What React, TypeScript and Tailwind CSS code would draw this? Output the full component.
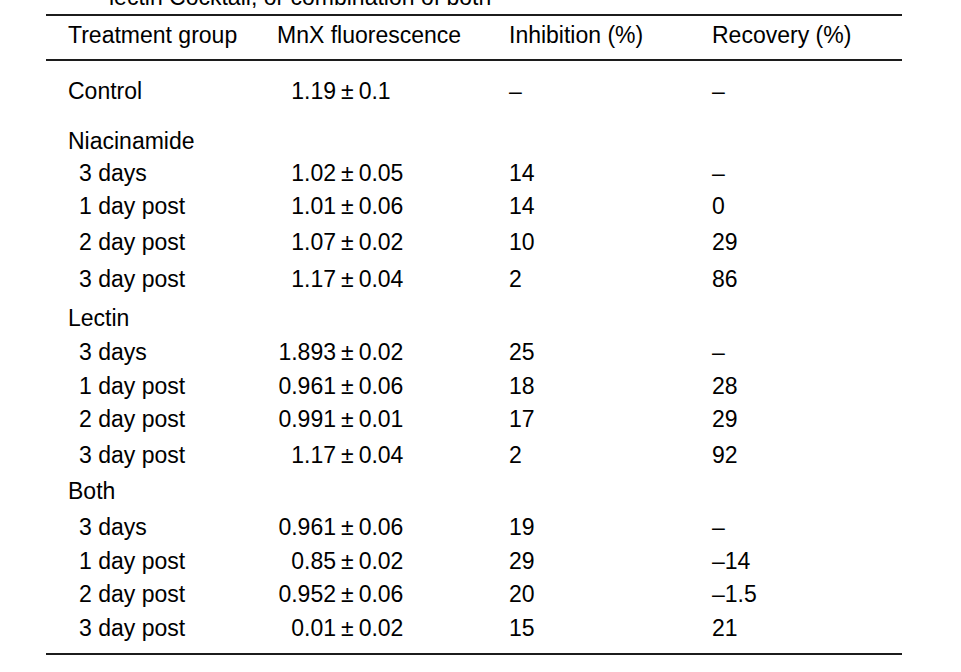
import React from "react"

type Row = {
  label: string
  sub?: boolean
  h: string
  mean?: string
  sd?: string
  inhibition?: string
  recovery?: string
}

const rows: Row[] = [
  { label: "Control", h: "h-[50px]", mean: "1.19", sd: "0.1", inhibition: "–", recovery: "–" },
  { label: "Niacinamide", h: "h-[32px]" },
  { label: "3 days", sub: true, h: "h-[33px]", mean: "1.02", sd: "0.05", inhibition: "14", recovery: "–" },
  { label: "1 day post", sub: true, h: "h-[36px]", mean: "1.01", sd: "0.06", inhibition: "14", recovery: "0" },
  { label: "2 day post", sub: true, h: "h-[37px]", mean: "1.07", sd: "0.02", inhibition: "10", recovery: "29" },
  { label: "3 day post", sub: true, h: "h-[39px]", mean: "1.17", sd: "0.04", inhibition: "2", recovery: "86" },
  { label: "Lectin", h: "h-[34px]" },
  { label: "3 days", sub: true, h: "h-[34px]", mean: "1.893", sd: "0.02", inhibition: "25", recovery: "–" },
  { label: "1 day post", sub: true, h: "h-[33px]", mean: "0.961", sd: "0.06", inhibition: "18", recovery: "28" },
  { label: "2 day post", sub: true, h: "h-[36px]", mean: "0.991", sd: "0.01", inhibition: "17", recovery: "29" },
  { label: "3 day post", sub: true, h: "h-[36px]", mean: "1.17", sd: "0.04", inhibition: "2", recovery: "92" },
  { label: "Both", h: "h-[36px]" },
  { label: "3 days", sub: true, h: "h-[34px]", mean: "0.961", sd: "0.06", inhibition: "19", recovery: "–" },
  { label: "1 day post", sub: true, h: "h-[33px]", mean: "0.85", sd: "0.02", inhibition: "29", recovery: "–14" },
  { label: "2 day post", sub: true, h: "h-[34px]", mean: "0.952", sd: "0.06", inhibition: "20", recovery: "–1.5" },
  { label: "3 day post", sub: true, h: "h-[36px]", mean: "0.01", sd: "0.02", inhibition: "15", recovery: "21" },
]

const cols = "grid grid-cols-[209px_232px_203px_1fr] pl-[22px]"

function Rule() {
  return <div className="h-[2px] bg-[#1c1c1c]" />
}

export default function App() {
  return (
    <div
      className="h-[672px] w-full overflow-hidden bg-white text-[23px] leading-[23px] text-black"
      style={{ fontFamily: '"Liberation Sans", Arial, sans-serif' }}
    >
      {/* Caption continuation, cut off by the top edge */}
      <p className="-mt-[14px] pl-[109px] whitespace-nowrap">lectin Cocktail, or combination of both</p>

      <div className="ml-[46px] mt-[5px] w-[856px]">
        <Rule />
        <div className={`${cols} h-[43px] pt-[8px] whitespace-nowrap`}>
          <span>Treatment group</span>
          <span>MnX fluorescence</span>
          <span>Inhibition (%)</span>
          <span>Recovery (%)</span>
        </div>
        <Rule />

        <div className="pt-[19px]">
          {rows.map((r, i) => (
            <div key={i} className={`${cols} ${r.h} whitespace-nowrap`}>
              <span className={r.sub ? "pl-[11px]" : ""}>{r.label}</span>
              <span className="flex">
                {r.mean && (
                  <>
                    <span className="w-[59px] text-right">{r.mean}</span>
                    <span className="ml-[5px]">±</span>
                    <span className="ml-[5px]">{r.sd}</span>
                  </>
                )}
              </span>
              <span>{r.inhibition}</span>
              <span>{r.recovery}</span>
            </div>
          ))}
        </div>
        <Rule />
      </div>
    </div>
  )
}
